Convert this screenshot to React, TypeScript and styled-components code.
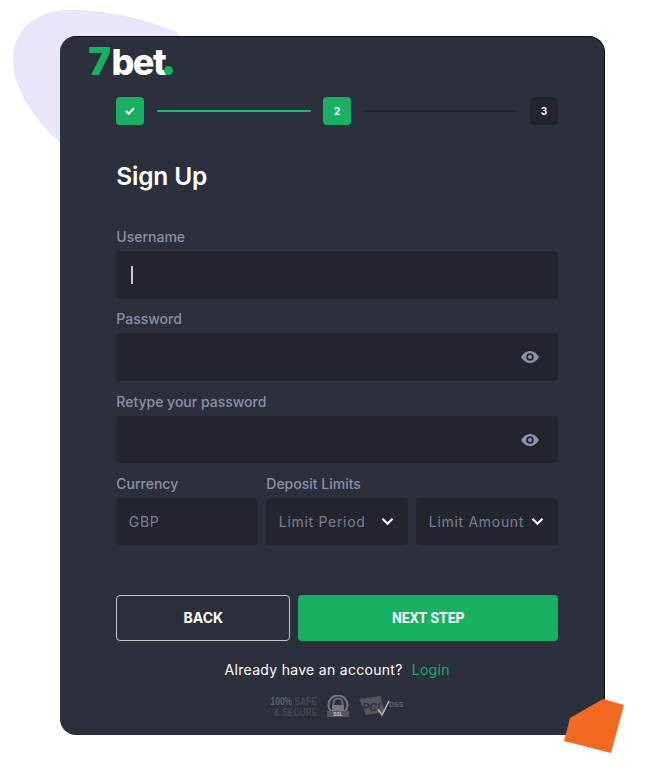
import React from "react";
import styled, { createGlobalStyle } from "styled-components";

const Global = createGlobalStyle`
  html, body { margin: 0; padding: 0; background: #fff; }
  * { box-sizing: border-box; }
  body { font-family: Inter, "Liberation Sans", sans-serif; }
`;

const Page = styled.div`
  position: relative;
  width: 664px;
  height: 771px;
  padding: 36px 59px 0 60px;
  overflow: hidden;
`;
const Blob = styled.svg`
  position: absolute;
  left: 0;
  top: 0;
  width: 200px;
  height: 160px;
`;
const Corner = styled.svg`
  position: absolute;
  left: 560px;
  top: 695px;
  width: 70px;
  height: 62px;
`;
const Card = styled.main`
  position: relative;
  height: 699px;
  background: #2c2f3c;
  border-radius: 16px;
  border-top: 1px solid #0d0e14;
  border-right: 1px solid #0d0e14;
  padding: 9px 46px 0 56.3px;
`;
const Logo = styled.div`
  display: flex;
  align-items: baseline;
  height: 30px;
  margin-left: -28px;
  font-family: Inter, sans-serif;
  font-weight: 800;
  font-size: 36px;
  line-height: 30px;
  letter-spacing: -1.5px;
  color: #fff;
`;
const Seven = styled.span`
  color: #17b161;
  font-family: Inter, sans-serif;
  font-weight: 900;
  font-size: 38px;
  margin-right: 2px;
`;
const Dot = styled.span`
  width: 9px;
  height: 9px;
  border-radius: 50%;
  background: #17b161;
  margin-left: -1px;
`;
const Stepper = styled.div`
  display: flex;
  align-items: center;
  gap: 12.6px;
  margin-top: 21px;
  height: 28px;
`;
const Step = styled.div<{ $active?: boolean }>`
  width: 28px;
  height: 28px;
  flex: none;
  border-radius: 4px;
  display: flex;
  align-items: center;
  justify-content: center;
  background: ${(p) => (p.$active ? "#17b161" : "#23252e")};
  color: #fff;
  font-size: 10px;
  font-weight: 700;
`;
const Line = styled.div<{ $active?: boolean }>`
  flex: 1;
  height: 2px;
  border-radius: 1px;
  background: ${(p) => (p.$active ? "#17c064" : "#23252e")};
`;
const Title = styled.h1`
  margin: 36px 0 0;
  height: 30px;
  color: #fff;
  font-size: 24.5px;
  letter-spacing: -0.2px;
  line-height: 30px;
  font-weight: 600;
`;
const Fields = styled.div`
  margin-top: 38px;
  display: flex;
  flex-direction: column;
  gap: 12.75px;
`;
const Field = styled.div`
  display: flex;
  flex-direction: column;
`;
const Label = styled.label`
  height: 22px;
  line-height: 15px;
  font-size: 14px;
  font-weight: 500;
  color: #8b8fa9;
`;
const InputBox = styled.div`
  position: relative;
  height: 47.5px;
  background: #24262f;
  border-radius: 4px;
  display: flex;
  align-items: center;
  padding: 0 15px;
  color: #8b8fa9;
`;
const Caret = styled.span`
  width: 2px;
  height: 18px;
  background: #c9cad2;
`;
const EyeIcon = styled.svg`
  position: absolute;
  right: 18px;
  top: 16px;
  width: 20px;
  height: 16px;
`;
const BottomRow = styled.div`
  display: grid;
  grid-template-columns: 142px 292px;
  column-gap: 8px;
`;
const Selects = styled.div`
  display: grid;
  grid-template-columns: 142px 142px;
  column-gap: 8px;
`;
const SelectBox = styled.div`
  height: 47.5px;
  background: #24262f;
  border-radius: 4px;
  display: flex;
  align-items: center;
  justify-content: space-between;
  padding: 0 14px 0 12.5px;
  font-family: Inter, sans-serif;
  font-size: 14px;
  font-weight: 400;
  letter-spacing: 0.7px;
  color: #7b7f98;
  white-space: nowrap;
`;
const Chevron = styled.svg`
  width: 13px;
  height: 9px;
  flex: none;
`;
const Buttons = styled.div`
  margin-top: 49.5px;
  display: grid;
  grid-template-columns: 174px 260px;
  column-gap: 8px;
`;
const Back = styled.button`
  height: 46px;
  border: 1px solid #c5c6cc;
  border-radius: 4px;
  background: transparent;
  color: #fff;
  font-family: Inter, sans-serif;
  font-weight: 700;
  font-size: 14px;
`;
const Next = styled.button`
  height: 46px;
  border: 0;
  border-radius: 4px;
  background: #17b161;
  color: #fff;
  font-family: Roboto, sans-serif;
  font-weight: 700;
  font-size: 14px;
`;
const Already = styled.p`
  margin: 20px 0 0;
  height: 18px;
  line-height: 18px;
  text-align: center;
  font-family: Inter, sans-serif;
  font-size: 14px;
  letter-spacing: 0.3px;
  color: #fff;
`;
const LoginLink = styled.a`
  color: #17b161;
  margin-left: 9px;
`;
const Badges = styled.div`
  margin-top: 15px;
  padding-left: 4px;
  display: flex;
  justify-content: center;
  align-items: center;
  gap: 9px;
  height: 26px;
`;
const Safe = styled.div`
  font-family: "Liberation Sans", sans-serif;
  font-weight: 700;
  font-size: 10.5px;
  line-height: 10.5px;
  text-align: right;
  color: #46474f;
  width: 46px;
  white-space: nowrap;
  display: flex;
  flex-direction: column;
  align-items: flex-end;
`;
const SafeLine = styled.span`
  display: block;
  transform: scaleX(0.8);
  transform-origin: right center;
`;
const SafeBright = styled.span`
  color: #606167;
`;
const BadgeSvg = styled.svg`
  display: block;
  flex: none;
`;

const Eye = () => (
  <EyeIcon viewBox="0 0 20 16">
    <path d="M1 8c2.500-4 5.500-6 9-6s6.500 2 9 6c-2.500 4-5.500 6-9 6s-6.500-2-9-6z" fill="#8f93ae" />
    <circle cx="10" cy="8" r="3.800" fill="#24262f" />
    <circle cx="10" cy="8" r="2" fill="#8f93ae" />
  </EyeIcon>
);
const Down = () => (
  <Chevron viewBox="0 0 13 9">
    <path d="M1.500 1.800 6.500 6.800 11.500 1.800" fill="none" stroke="#fff" strokeWidth="2" />
  </Chevron>
);

export default function App() {
  return (
    <Page>
      <Global />
      <Blob viewBox="0 0 200 160">
        <path d="M60 143C33 118 13 88 13 60 13 30 35 10 70 10c40 0 80 10 108 23v110z" fill="#e8e6f8" />
      </Blob>
      <Card>
        <Logo>
          <Seven>7</Seven>bet<Dot />
        </Logo>
        <Stepper>
          <Step $active>
            <svg width="12" height="10" viewBox="0 0 12 10">
              <path d="M2 5 4.700 7.700 10 2.200" fill="none" stroke="#fff" strokeWidth="2" />
            </svg>
          </Step>
          <Line $active />
          <Step $active>2</Step>
          <Line />
          <Step>3</Step>
        </Stepper>
        <Title>Sign Up</Title>
        <Fields>
          <Field>
            <Label>Username</Label>
            <InputBox>
              <Caret />
            </InputBox>
          </Field>
          <Field>
            <Label>Password</Label>
            <InputBox>
              <Eye />
            </InputBox>
          </Field>
          <Field>
            <Label>Retype your password</Label>
            <InputBox>
              <Eye />
            </InputBox>
          </Field>
          <BottomRow>
            <Field>
              <Label>Currency</Label>
              <SelectBox>GBP</SelectBox>
            </Field>
            <Field>
              <Label>Deposit Limits</Label>
              <Selects>
                <SelectBox>
                  Limit Period
                  <Down />
                </SelectBox>
                <SelectBox>
                  Limit Amount
                  <Down />
                </SelectBox>
              </Selects>
            </Field>
          </BottomRow>
        </Fields>
        <Buttons>
          <Back>BACK</Back>
          <Next>NEXT STEP</Next>
        </Buttons>
        <Already>
          Already have an account?
          <LoginLink>Login</LoginLink>
        </Already>
        <Badges>
          <Safe>
            <SafeLine>
              <SafeBright>100%</SafeBright> SAFE
            </SafeLine>
            <SafeLine>&amp; SECURE</SafeLine>
          </Safe>
          <BadgeSvg width="24" height="24" viewBox="0 0 24 24">
            <circle cx="12" cy="10" r="9.500" fill="none" stroke="#77787e" strokeWidth="2" />
            <path d="M7.500 11V8a4.500 4.500 0 0 1 9 0v3" fill="none" stroke="#6b6c72" strokeWidth="2" />
            <rect x="6" y="10" width="12" height="8" fill="#77787e" />
            <rect x="1" y="16" width="22" height="6" fill="#55565d" />
            <text x="12" y="21" fontSize="5" fontWeight="700" textAnchor="middle" fill="#c4c5c9" fontFamily="Liberation Sans">SSL</text>
          </BadgeSvg>
          <BadgeSvg width="48" height="22" viewBox="0 0 48 22">
            <path d="M0 3 22 0V2L26 16 7 19z" fill="#55565c" />
            <text x="3" y="15" fontSize="11" fontWeight="700" fontStyle="italic" fill="#2c2f3c" fontFamily="Liberation Sans">PCI</text>
            <path d="M19 13l4 6L30 5" fill="none" stroke="#b5b6ba" strokeWidth="1.600" />
            <text x="30" y="11" fontSize="7" fontWeight="700" fill="#63646b" fontFamily="Liberation Sans">DSS</text>
          </BadgeSvg>
        </Badges>
      </Card>
      <Corner viewBox="560 695 70 62">
        <polygon points="603,699 624,705 611,753 564,741 570,718" fill="#f26a21" />
      </Corner>
    </Page>
  );
}
